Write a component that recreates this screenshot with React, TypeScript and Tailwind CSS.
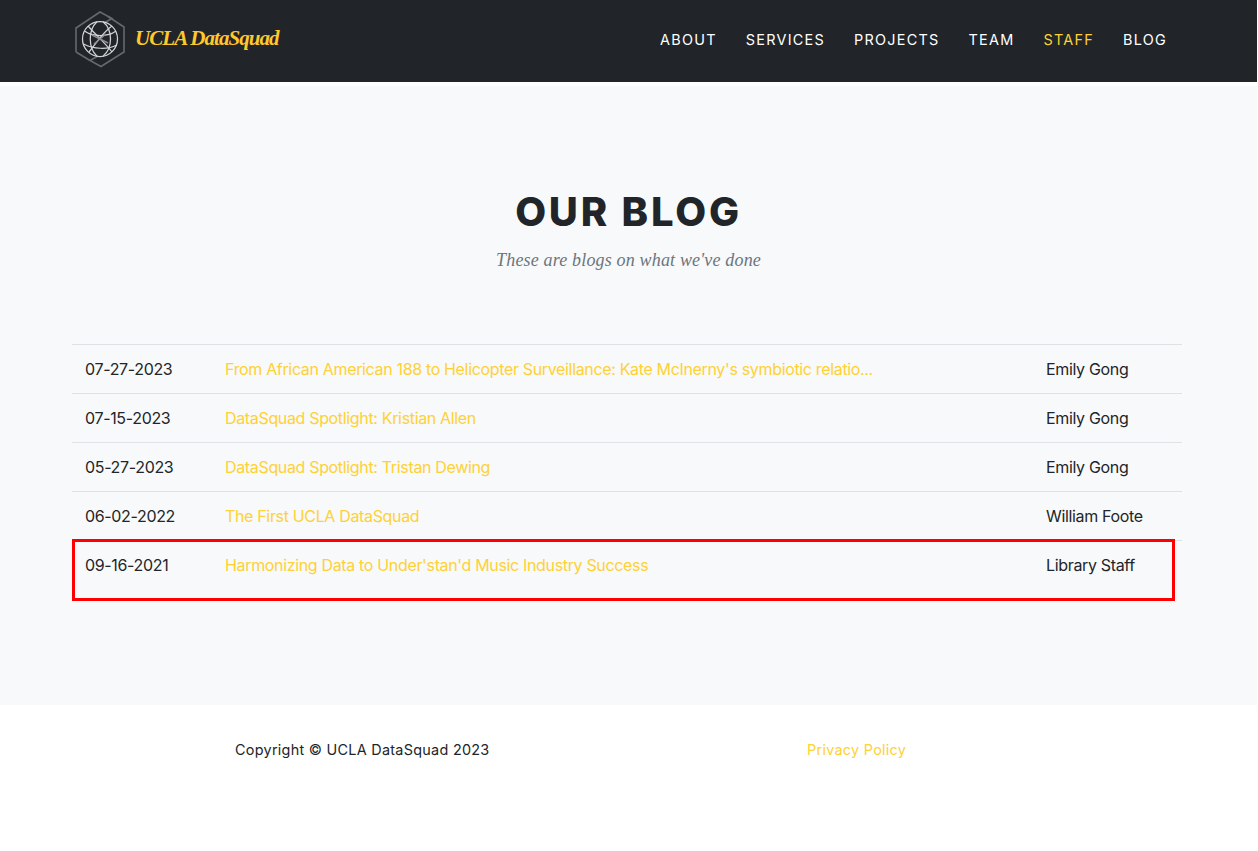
const rows = [
  { date: "07-27-2023", title: "From African American 188 to Helicopter Surveillance: Kate McInerny's symbiotic relatio...", author: "Emily Gong" },
  { date: "07-15-2023", title: "DataSquad Spotlight: Kristian Allen", author: "Emily Gong" },
  { date: "05-27-2023", title: "DataSquad Spotlight: Tristan Dewing", author: "Emily Gong" },
  { date: "06-02-2022", title: "The First UCLA DataSquad", author: "William Foote" },
  { date: "09-16-2021", title: "Harmonizing Data to Under'stan'd Music Industry Success", author: "Library Staff" },
];

const links = ["ABOUT", "SERVICES", "PROJECTS", "TEAM", "STAFF", "BLOG"];

function Logo() {
  return (
    <svg width="52" height="58" viewBox="0 0 52 58" fill="none" className="shrink-0">
      {/* two interlocked halves of the hexagon */}
      <path d="M1 42 V18 L25 2 L37 8.5 L29 13" stroke="#65686c" strokeWidth="1.6" />
      <path d="M33 6.5 L49 17 V42 L26 56.5 L15 50.5 L23 46" stroke="#65686c" strokeWidth="1.6" />
      <path d="M1 42 L15 50.5" stroke="#65686c" strokeWidth="1.6" />
      {/* globe */}
      <g stroke="#d2d3d4" strokeWidth="1.25">
        <circle cx="25" cy="29" r="17.5" />
        <path d="M22 11.8 C13 20 13 38 22 46.2" />
        <path d="M28 11.8 C38 20 38 38 28 46.2" />
        <path d="M9.5 21 C18 27 33 27 41 21" />
        <path d="M8.5 34 C18 39 33 40 41.5 35" />
        <path d="M13 16 C20 24 32 35 37 42" />
        <path d="M37 16 C29 21 23 31 14 42" />
      </g>
      <path d="M17 25 L33 33 M19 34 L31 24" stroke="#8b8d90" strokeWidth="1.4" />
    </svg>
  );
}

export default function App() {
  return (
    <div className="h-[851px] w-[1257px] overflow-hidden bg-white font-['Inter',sans-serif] text-[#212529]">
      <header className="h-[82px] bg-[#212529]">
        <div className="flex h-full items-center justify-between pl-[75px] pr-[90px]">
          <div className="flex items-center gap-[8px] pb-[5px]">
            <Logo />
            <span className="font-['Liberation_Serif',serif] text-[21px] font-bold italic leading-none tracking-[-0.95px] text-[#ffc82b]">
              UCLA DataSquad
            </span>
          </div>
          <nav className="flex gap-[29px] pb-[3px] font-['Inter',sans-serif] text-[14.4px] tracking-[1.27px] text-white">
            {links.map((l) => (
              <a key={l} className={l === "STAFF" ? "text-[#fed136]" : ""}>
                {l}
              </a>
            ))}
          </nav>
        </div>
      </header>

      <main className="mt-[4px] h-[619px] bg-[#f8f9fa] pt-[102px]">
        <h2 className="text-center font-['Inter',sans-serif] text-[40px] font-extrabold leading-[48px] tracking-[2.8px] text-[#212529]">
          OUR BLOG
        </h2>
        <p className="mt-[12px] text-center font-['Liberation_Serif',serif] text-[18px] italic leading-[24px] tracking-[0.17px] text-[#6c757d]">
          These are blogs on what we've done
        </p>

        <div className="relative ml-[72px] mt-[72px] w-[1110px]">
          {rows.map((r) => (
            <div key={r.date} className="flex h-[49px] items-center border-t border-[#dee2e6] pb-[1px] text-[16px] leading-[24px] tracking-[-0.34px]">
              <span className="w-[153px] pl-[13px]">{r.date}</span>
              <a className="w-[821px] text-[#fed136]">{r.title}</a>
              <span>{r.author}</span>
            </div>
          ))}
          {/* highlight drawn over the last row */}
          <div className="absolute left-0 top-[195px] h-[62px] w-[1103px] border-[3px] border-[#ff0000]" />
        </div>
      </main>

      <footer className="flex h-[146px] pt-[33px] font-['Inter',sans-serif] text-[14.4px] leading-[24px] tracking-[0.28px]">
        <span className="ml-[235px] w-[572px]">Copyright © UCLA DataSquad 2023</span>
        <a className="text-[#fed136]">Privacy Policy</a>
      </footer>
    </div>
  );
}
